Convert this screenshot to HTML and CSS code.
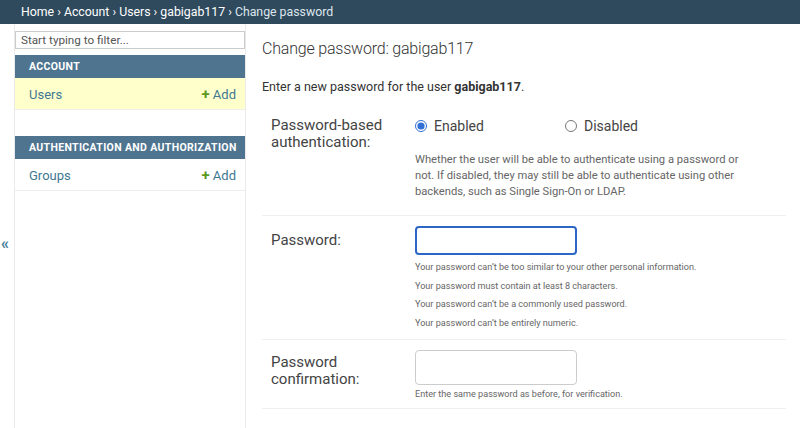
FILE: index.html
```html
<!DOCTYPE html>
<html lang="en">
<head>
    <meta charset="UTF-8">
    <meta name="viewport" content="width=device-width, initial-scale=1.0">
    <title>Change password | Django site admin</title>
    <link rel="stylesheet" href="styles.css">
</head>
<body>
    <!-- Migas de pan -->
    <div class="breadcrumbs">
        <a href="#">Home</a> &rsaquo; <a href="#">Account</a> &rsaquo; <a href="#">Users</a> &rsaquo; <a href="#">gabigab117</a> &rsaquo; <span class="current">Change password</span>
    </div>

    <div class="main">
        <div class="toggle-nav">&laquo;</div>

        <nav class="sidebar">
            <input type="search" class="nav-filter" placeholder="Start typing to filter...">

            <div class="module">
                <div class="caption">Account</div>
                <div class="model-row current-model">
                    <a href="#">Users</a>
                    <a href="#" class="addlink"><span class="plus">+</span> Add</a>
                </div>
            </div>

            <div class="module">
                <div class="caption">Authentication and Authorization</div>
                <div class="model-row">
                    <a href="#">Groups</a>
                    <a href="#" class="addlink"><span class="plus">+</span> Add</a>
                </div>
            </div>
        </nav>

        <div class="content">
            <h1>Change password: gabigab117</h1>
            <p class="intro">Enter a new password for the user <strong>gabigab117</strong>.</p>

            <div class="fieldset">
                <div class="form-row">
                    <label class="field-label">Password-based authentication:</label>
                    <div class="field-box">
                        <div class="radios">
                            <label class="radio"><input type="radio" name="usable" checked> Enabled</label>
                            <label class="radio"><input type="radio" name="usable"> Disabled</label>
                        </div>
                        <div class="help">Whether the user will be able to authenticate using a password or not. If disabled, they may still be able to authenticate using other backends, such as Single Sign-On or LDAP.</div>
                    </div>
                </div>

                <div class="form-row">
                    <label class="field-label pw-label">Password:</label>
                    <div class="field-box">
                        <input type="password" class="text-input focused">
                        <ul class="help-list">
                            <li>Your password can’t be too similar to your other personal information.</li>
                            <li>Your password must contain at least 8 characters.</li>
                            <li>Your password can’t be a commonly used password.</li>
                            <li>Your password can’t be entirely numeric.</li>
                        </ul>
                    </div>
                </div>

                <div class="form-row">
                    <label class="field-label conf-label">Password confirmation:</label>
                    <div class="field-box">
                        <input type="password" class="text-input tall">
                        <div class="help small">Enter the same password as before, for verification.</div>
                    </div>
                </div>
            </div>
        </div>
    </div>
</body>
</html>
```

FILE: styles.css
```css
/* Estilos generales */
body {
    margin: 0;
    font-family: Roboto, "Noto Sans", sans-serif;
    color: #333;
    background: #fff;
}

a {
    text-decoration: none;
}

/* Barra de migas */
.breadcrumbs {
    background: #2f4a5d;
    color: #fff;
    height: 24px;
    line-height: 24px;
    padding: 0 21px;
    font-size: 12.3px;
}

.breadcrumbs a {
    color: #fff;
}

.breadcrumbs .current {
    color: #dde6ec;
}

.main {
    display: flex;
    min-height: calc(100vh - 24px);
}

/* Botón para plegar la barra lateral */
.toggle-nav {
    width: 14px;
    color: #447e9b;
    font-size: 16px;
    font-weight: 700;
    padding-top: 210px;
    box-sizing: border-box;
    text-indent: 1px;
}

/* Barra lateral */
.sidebar {
    width: 230px;
    border-left: 1px solid #eaeaea;
    border-right: 1px solid #eaeaea;
    flex-shrink: 0;
}

.nav-filter {
    display: block;
    width: 100%;
    height: 18px;
    margin: 7px 0 6px;
    padding: 0 5px;
    border: 1px solid #ccc;
    box-sizing: border-box;
    font-family: inherit;
    font-size: 11.7px;
    color: #333;
}

.nav-filter::placeholder {
    color: #555;
}

.module {
    margin-bottom: 26px;
}

.caption {
    background: #4e7490;
    color: #fff;
    height: 23px;
    line-height: 23px;
    padding: 0 14px;
    font-size: 10.5px;
    font-weight: 700;
    text-transform: uppercase;
    letter-spacing: 0.35px;
    white-space: nowrap;
    overflow: hidden;
}

.model-row {
    display: flex;
    justify-content: space-between;
    align-items: center;
    height: 32px;
    padding: 1px 9px 0 14px;
    border-bottom: 1px solid #eee;
    font-size: 13px;
    box-sizing: border-box;
}

.model-row a {
    color: #417893;
}

.current-model {
    background: #ffffcc;
}

.addlink .plus {
    color: #5b9a22;
    font-weight: 700;
    font-size: 15px;
}

/* Contenido principal */
.content {
    flex: 1;
    padding: 0 14px 0 16px;
}

h1 {
    margin: 13px 0 0;
    font-size: 16px;
    line-height: 24px;
    font-weight: 300;
    letter-spacing: -0.2px;
    color: #333;
}

.intro {
    margin: 18px 0 0;
    font-size: 12.5px;
    line-height: 16px;
    color: #333;
}

.fieldset {
    margin-top: 12px;
}

.form-row {
    display: flex;
    padding: 10px 9px;
    border-bottom: 1px solid #eee;
}

.field-label {
    width: 144px;
    flex-shrink: 0;
    font-size: 15px;
    line-height: 17px;
    color: #444;
}

.pw-label {
    padding-top: 6px;
}

.conf-label {
    padding-top: 4px;
}

.radios {
    display: flex;
    height: 17px;
    align-items: center;
    font-size: 14px;
    color: #444;
}

.radio {
    display: flex;
    align-items: center;
    width: 150px;
}

.radio input {
    margin: 0 7px 0 0;
    width: 12px;
    height: 12px;
    accent-color: #2f6fd6;
}

.help {
    margin: 18px 0 5px;
    font-size: 11.2px;
    line-height: 16px;
    color: #666;
    max-width: 330px;
}

.help.small {
    margin: 3px 0 -2px;
    font-size: 9.1px;
    line-height: 12px;
    max-width: none;
}

.text-input {
    display: block;
    width: 162px;
    height: 29px;
    border: 1px solid #ccc;
    border-radius: 4px;
    box-sizing: border-box;
    font-family: inherit;
}

.text-input.focused {
    border: 2px solid #2d66c4;
    outline: none;
}

.text-input.tall {
    height: 35px;
}

.help-list {
    list-style: none;
    margin: 3px 0 -3px;
    padding: 0;
    font-size: 9.1px;
    line-height: 18.5px;
    color: #666;
}
```
